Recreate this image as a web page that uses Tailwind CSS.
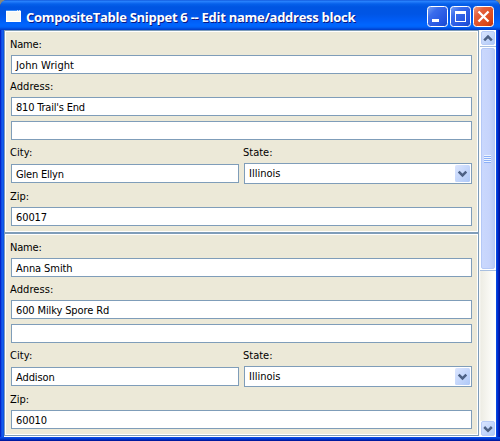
<!DOCTYPE html>
<html lang="en">
<head>
<meta charset="utf-8">
<title>CompositeTable Snippet 6</title>
<script src="https://cdn.jsdelivr.net/npm/@tailwindcss/browser@4"></script>
</head>
<body class="w-[500px] h-[441px] overflow-hidden bg-[#8a8878]">
<div class="w-[500px] h-[441px] flex flex-col rounded-t-[7px] overflow-hidden bg-[linear-gradient(90deg,#0010b8_0,#0838d8_1px,#1660f0_2px,#0a50e0_4px,#0a50e0_496px,#0040e0_497px,#0028c8_498px,#001090_500px)]">
  <header class="h-[30px] shrink-0 flex items-center pl-[6px] pr-[6px] pt-[3px] bg-[linear-gradient(180deg,#0a48d0_0,#2a88ff_1px,#2078f8_2px,#0560ea_4px,#0055e2_7px,#0055e5_14px,#005cf5_20px,#0066ff_25px,#0062f8_27px,#0048d8_29px,#003cc8_30px)]">
    <svg class="w-4 h-4 shrink-0 -mt-[2px]" viewBox="0 0 16 16" shape-rendering="crispEdges"><path fill="#fff" d="M0 3h15v11H0z"/><path fill="#3f8ff5" d="M0 2h15v1H0z"/><path fill="#f8f8f2" d="M1 4h13v9H1z"/><path fill="#c8d8f0" d="M11 2h1v1h-1zM13 2h1v1h-1z"/></svg>
    <h1 class="ml-1 grow whitespace-nowrap text-white font-bold text-[13px] leading-[20px] tracking-[-0.27px] [font-family:'Open_Sans',sans-serif] [text-shadow:1px_1px_0_#0a1883]">CompositeTable Snippet 6 -- Edit name/address block</h1>
    <div class="flex gap-[2px] -mt-px">
      <svg class="w-[21px] h-[21px]" viewBox="0 0 21 21"><defs><linearGradient id="b" x1="0" y1="0" x2="1" y2="1"><stop offset="0" stop-color="#7ba3f4"/><stop offset=".3" stop-color="#3a6cec"/><stop offset=".75" stop-color="#2454e0"/><stop offset="1" stop-color="#1848c8"/></linearGradient></defs><rect x=".5" y=".5" width="20" height="20" rx="3" fill="url(#b)" stroke="#fff"/><path fill="#fff" d="M5 13h7v3H5z"/></svg>
      <svg class="w-[21px] h-[21px]" viewBox="0 0 21 21"><rect x=".5" y=".5" width="20" height="20" rx="3" fill="url(#b)" stroke="#fff"/><path fill="#fff" fill-rule="evenodd" d="M5 5h11v11H5zM6 8v7h9V8z"/></svg>
      <svg class="w-[21px] h-[21px]" viewBox="0 0 21 21"><defs><linearGradient id="r" x1="0" y1="0" x2="1" y2="1"><stop offset="0" stop-color="#f0a088"/><stop offset=".3" stop-color="#e4603c"/><stop offset=".75" stop-color="#dc4818"/><stop offset="1" stop-color="#b83010"/></linearGradient></defs><rect x=".5" y=".5" width="20" height="20" rx="3" fill="url(#r)" stroke="#fff"/><path stroke="#fff" stroke-width="2.3" d="M5.5 5.5l10 10M15.5 5.5l-10 10"/></svg>
    </div>
  </header>
  <div class="mx-1 h-[407px] shrink-0 flex bg-white text-black text-[11px] [font-family:'DejaVu_Sans_Condensed','DejaVu_Sans',sans-serif] font-stretch-condensed">
    <main class="w-[475px] h-[406px] shrink-0 border border-[#7f9db9]">
      <section class="h-[200px] bg-[#ece9d8] border-x border-t border-white px-[5px] flex flex-col">
        <label class="h-[23px] pt-px leading-[23px] -ml-px shrink-0 tracking-[-0.2px]">Name:</label>
        <div class="h-[19px] shrink-0 border border-[#7f9db9] bg-white pl-1 pt-px leading-[18px] tracking-[0.08px]">John Wright</div>
        <label class="h-[23px] pt-px leading-[23px] -ml-px shrink-0 tracking-[0.1px]">Address:</label>
        <div class="h-[19px] shrink-0 border border-[#7f9db9] bg-white pl-1 pt-px leading-[18px] tracking-[-0.2px]">810 Trail's End</div>
        <div class="h-[19px] mt-[5px] shrink-0 border border-[#7f9db9] bg-white"></div>
        <div class="flex gap-[5px] h-11 shrink-0">
          <div class="w-[228px]"><label class="block h-[23px] pt-px leading-[23px] -ml-px tracking-[0.1px]">City:</label>
            <div class="h-[19px] mt-px border border-[#7f9db9] bg-white pl-1 pt-px leading-[18px] tracking-[-0.2px]">Glen Ellyn</div></div>
          <div class="w-[228px]"><label class="block h-[23px] pt-px leading-[23px] -ml-px">State:</label>
            <div class="h-[21px] border border-[#7f9db9] bg-white pl-1 pr-px flex items-center justify-between leading-[19px]">Illinois
              <svg class="w-[15px] h-[17px]" viewBox="0 0 15 17"><defs><linearGradient id="s" x1="0" y1="0" x2="1" y2="1"><stop offset="0" stop-color="#dce6ff"/><stop offset="1" stop-color="#aec8f7"/></linearGradient></defs><rect width="15" height="17" rx="1.5" fill="url(#s)"/><path fill="none" stroke="#4d6185" stroke-width="2.5" d="M3.7 6.7l3.8 3.8 3.8-3.8"/></svg></div></div>
        </div>
        <label class="h-[23px] pt-px leading-[23px] -ml-px shrink-0">Zip:</label>
        <div class="h-[19px] shrink-0 border border-[#7f9db9] bg-white pl-1 pt-px leading-[18px] tracking-[-0.1px]">60017</div>
      </section>
      <div class="h-[3px] border-t border-white bg-[#7f9db9]"></div>
      <section class="h-[201px] bg-[#ece9d8] border border-white px-[5px] flex flex-col">
        <label class="h-[23px] pt-px leading-[23px] -ml-px shrink-0 tracking-[-0.2px]">Name:</label>
        <div class="h-[19px] shrink-0 border border-[#7f9db9] bg-white pl-1 pt-px leading-[18px] tracking-[-0.08px]">Anna Smith</div>
        <label class="h-[23px] pt-px leading-[23px] -ml-px shrink-0 tracking-[0.1px]">Address:</label>
        <div class="h-[19px] shrink-0 border border-[#7f9db9] bg-white pl-1 pt-px leading-[18px] tracking-[-0.12px]">600 Milky Spore Rd</div>
        <div class="h-[19px] mt-[5px] shrink-0 border border-[#7f9db9] bg-white"></div>
        <div class="flex gap-[5px] h-11 shrink-0">
          <div class="w-[228px]"><label class="block h-[23px] pt-px leading-[23px] -ml-px tracking-[0.1px]">City:</label>
            <div class="h-[19px] mt-px border border-[#7f9db9] bg-white pl-1 pt-px leading-[18px] tracking-[-0.1px]">Addison</div></div>
          <div class="w-[228px]"><label class="block h-[23px] pt-px leading-[23px] -ml-px">State:</label>
            <div class="h-[21px] border border-[#7f9db9] bg-white pl-1 pr-px flex items-center justify-between leading-[19px]">Illinois
              <svg class="w-[15px] h-[17px]" viewBox="0 0 15 17"><rect width="15" height="17" rx="1.5" fill="url(#s)"/><path fill="none" stroke="#4d6185" stroke-width="2.5" d="M3.7 6.7l3.8 3.8 3.8-3.8"/></svg></div></div>
        </div>
        <label class="h-[23px] pt-px leading-[23px] -ml-px shrink-0">Zip:</label>
        <div class="h-[19px] shrink-0 border border-[#7f9db9] bg-white pl-1 pt-px leading-[18px] tracking-[-0.1px]">60010</div>
      </section>
    </main>
    <aside class="w-[17px] shrink-0 flex flex-col items-center bg-[linear-gradient(90deg,#fff_0,#eeede5_2px,#fefefb_15px,#fff_17px)]">
      <svg class="w-4 h-4 shrink-0" viewBox="0 0 16 16"><rect width="16" height="16" fill="#fff"/><rect x="1.5" y="1.5" width="13" height="13" rx="1.5" fill="url(#s)" stroke="#b8cbf6"/><path fill="none" stroke="#4d6185" stroke-width="2.5" d="M4.2 10.3L8 6.5l3.8 3.8"/></svg>
      <div class="w-4 h-[225px] shrink-0 bg-white px-px pt-px border-y border-[#a8bfe0] pb-px">
        <div class="h-full rounded-[2px] border border-[#b4c8f6] bg-[linear-gradient(90deg,#cad8fd,#c6d4fc_60%,#b8cbf6)] flex flex-col items-center justify-center">
          <div class="w-[7px] h-2 bg-[repeating-linear-gradient(180deg,#eef4fe_0,#eef4fe_1px,#8cb0f8_1px,#8cb0f8_2px)]"></div>
        </div>
      </div>
      <svg class="w-4 h-4 shrink-0 mt-auto" viewBox="0 0 16 16"><rect width="16" height="16" fill="#fff"/><rect x="1.5" y=".5" width="13" height="14" rx="1.5" fill="url(#s)" stroke="#b8cbf6"/><path fill="none" stroke="#4d6185" stroke-width="2.5" d="M4.2 6L8 9.8 11.8 6"/></svg>
    </aside>
  </div>
  <div class="h-1 shrink-0 bg-[linear-gradient(180deg,#0a50e8,#0038d0_50%,#001090)]"></div>
</div>
</body>
</html>
